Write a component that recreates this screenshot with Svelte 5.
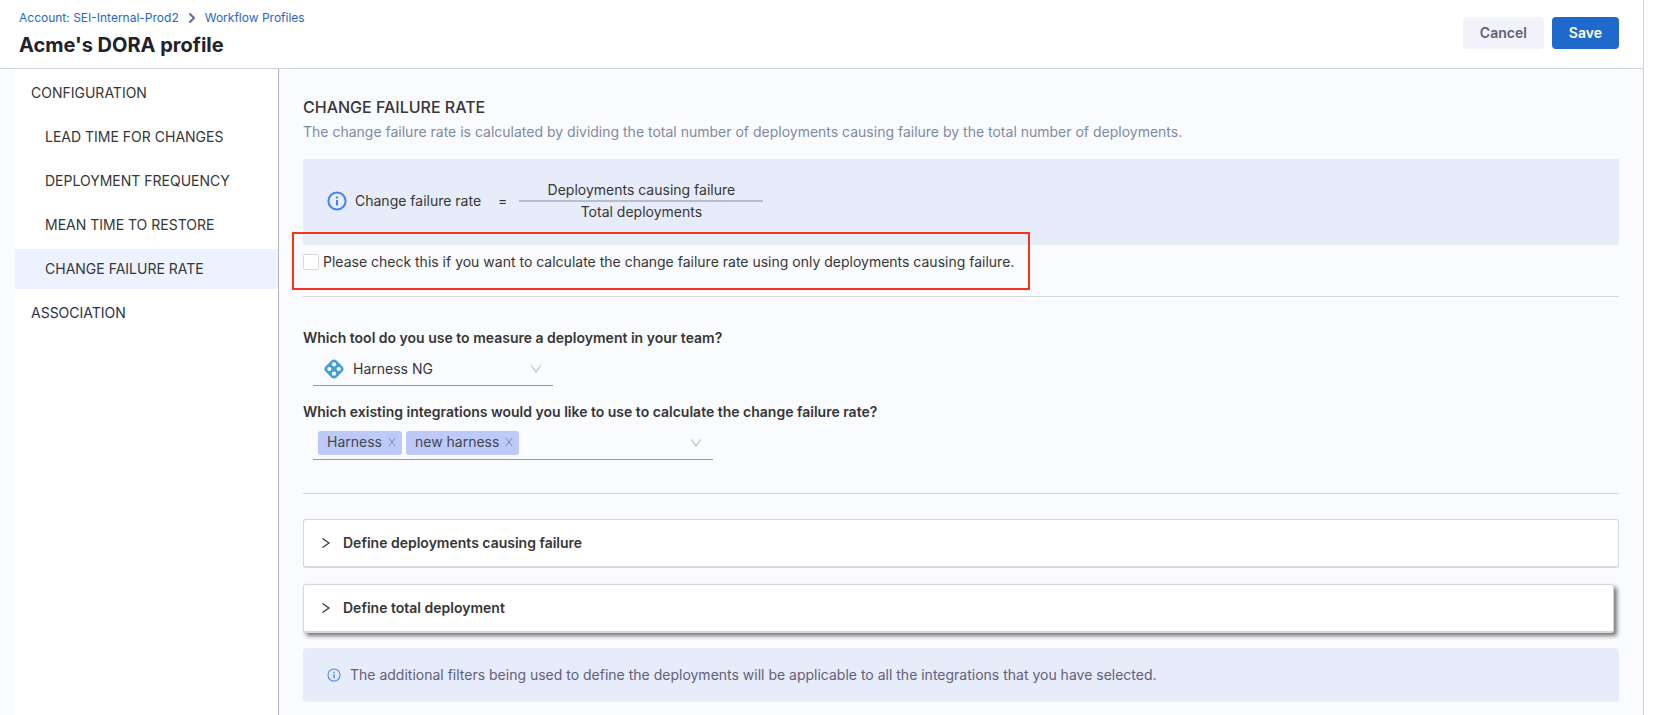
<script>
  const sections = ['LEAD TIME FOR CHANGES', 'DEPLOYMENT FREQUENCY', 'MEAN TIME TO RESTORE', 'CHANGE FAILURE RATE'];
  const active = 'CHANGE FAILURE RATE';
  let integrations = $state(['Harness', 'new harness']);
  let onlyFailures = $state(false);
  const remove = (name) => (integrations = integrations.filter((i) => i !== name));
</script>

{#snippet info(size)}
  <svg class="info-icon" width={size} height={size} viewBox="0 0 20 20" fill="none" aria-hidden="true">
    <circle cx="10" cy="10" r="8.6" stroke="currentColor" stroke-width={size > 16 ? 2 : 1.5} />
    <path d="M10 9v5.5M10 5.4v2" stroke="currentColor" stroke-width="2" />
  </svg>
{/snippet}

{#snippet down()}
  <svg class="down" width="12" height="12" viewBox="0 0 12 12" fill="none" aria-hidden="true">
    <path d="M1.3 2.5 6 9l4.7-6.5" stroke="#b9bbc0" stroke-width="1.1" />
  </svg>
{/snippet}

<div class="app">
  <header>
    <div class="heading">
      <nav class="crumbs" aria-label="Breadcrumb">
        <a href="#account">Account: SEI-Internal-Prod2</a>
        <svg width="8" height="10" viewBox="0 0 8 10" fill="none" aria-hidden="true">
          <path d="m2 1 4 4-4 4" stroke="#5c6b7c" stroke-width="1.8" stroke-linecap="round" stroke-linejoin="round" />
        </svg>
        <a href="#profiles">Workflow Profiles</a>
      </nav>
      <h1>Acme's DORA profile</h1>
    </div>
    <div class="actions">
      <button class="btn cancel">Cancel</button>
      <button class="btn save">Save</button>
    </div>
  </header>

  <div class="body">
    <nav class="side" aria-label="Profile sections">
      <a class="group" href="#configuration">CONFIGURATION</a>
      {#each sections as s}
        <a class="sub" class:active={s === active} href="#{s.toLowerCase().replaceAll(' ', '-')}">{s}</a>
      {/each}
      <a class="group navy" href="#association">ASSOCIATION</a>
    </nav>

    <main>
      <h2>CHANGE FAILURE RATE</h2>
      <p class="desc">The change failure rate is calculated by dividing the total number of deployments causing failure by the total number of deployments.</p>

      <div class="formula">
        {@render info(20)}
        <span class="term">Change failure rate</span>
        <span class="equals">=</span>
        <div class="fraction">
          <span class="top">Deployments causing failure</span>
          <span>Total deployments</span>
        </div>
      </div>

      <div class="only">
        <label>
          <input type="checkbox" bind:checked={onlyFailures} />
          Please check this if you want to calculate the change failure rate using only deployments causing failure.
        </label>
      </div>

      <section class="tools">
        <label class="question" for="tool">Which tool do you use to measure a deployment in your team?</label>
        <div class="field tool">
          <svg width="20" height="20" viewBox="0 0 20 20" aria-hidden="true">
            <rect x="2.2" y="2.2" width="15.6" height="15.6" rx="4" transform="rotate(45 10 10)" fill="#459dd8" />
            <g fill="#fff">
              <circle cx="10" cy="5.3" r="2.1" />
              <circle cx="14.7" cy="10" r="2.1" />
              <circle cx="10" cy="14.7" r="2.1" />
              <circle cx="5.3" cy="10" r="2.1" />
            </g>
          </svg>
          <select id="tool"><option>Harness NG</option></select>
          {@render down()}
        </div>

        <span class="question" id="integrations">Which existing integrations would you like to use to calculate the change failure rate?</span>
        <div class="field multi" role="group" aria-labelledby="integrations">
          {#each integrations as name}
            <span class="tag">
              {name}
              <button aria-label="Remove {name}" onclick={() => remove(name)}>
                <svg width="8" height="10" viewBox="0 0 8 10" fill="none" aria-hidden="true">
                  <path d="m.8 1 6.4 8M7.2 1 .8 9" stroke="#80869f" stroke-width="1" />
                </svg>
              </button>
            </span>
          {/each}
          <button class="open" aria-label="Choose integrations">{@render down()}</button>
        </div>
      </section>

      {#each ['Define deployments causing failure', 'Define total deployment'] as title, i}
        <button class="panel" class:raised={i === 1} aria-expanded="false">
          <svg width="10" height="12" viewBox="0 0 10 12" fill="none" aria-hidden="true">
            <path d="m1.5 1.5 6.5 4.500-6.500 4.500" stroke="#333" stroke-width="1.2" />
          </svg>
          {title}
        </button>
      {/each}

      <div class="note">
        {@render info(14)}
        The additional filters being used to define the deployments will be applicable to all the integrations that you have selected.
      </div>
    </main>
  </div>
</div>

<style>
  :global(body) {
    margin: 0;
    background: #fff;
  }
  .app,
  .app *,
  .only::after {
    box-sizing: border-box;
  }
  .app {
    display: flex;
    flex-direction: column;
    min-height: 100vh;
    margin-right: 34px;
    border-right: 1px solid #d0d0df;
    background: #fafbff;
    font: 14px/20px Inter, sans-serif;
    color: #363636;
  }
  a {
    text-decoration: none;
    color: inherit;
  }
  button,
  select {
    font: inherit;
    color: inherit;
    border: 0;
    padding: 0;
    background: none;
    cursor: pointer;
  }
  svg {
    flex: none;
  }
  header {
    display: flex;
    justify-content: space-between;
    padding: 8px 24px 9px 19px;
    border-bottom: 1px solid #cfcfe2;
    background: #fff;
  }
  .crumbs {
    display: flex;
    align-items: center;
    gap: 9px;
    font-size: 12px;
    color: #1f68cb;
  }
  h1 {
    margin: 3px 0 0;
    font-size: 20px;
    line-height: 28px;
    font-weight: 700;
    color: #22222a;
  }
  .actions {
    display: flex;
    gap: 8px;
    padding-top: 9px;
  }
  .btn {
    height: 32px;
    padding: 0 17px;
    border-radius: 4px;
    font-weight: 600;
  }
  .cancel {
    background: #f2f2fa;
    color: #636078;
  }
  .save {
    background: #1f69cd;
    color: #fff;
  }
  .body {
    flex: 1;
    display: flex;
  }
  .side {
    display: flex;
    flex-direction: column;
    gap: 4px;
    width: 264px;
    flex: none;
    margin-left: 15px;
    padding-top: 4px;
    border-right: 1px solid #b1b2b5;
    background: #fff;
  }
  .side a {
    padding: 10px 16px;
  }
  .side .sub {
    padding-left: 30px;
  }
  .side .active {
    background: #ecf2ff;
  }
  .side .navy {
    color: #27304f;
  }
  main {
    flex: 1;
    min-width: 0;
    padding: 28px 24px 13px;
  }
  h2 {
    margin: 0;
    font-size: 16px;
    line-height: 20px;
    font-weight: 500;
  }
  .desc {
    margin: 5px 0 17px;
    color: #7f8a9f;
  }
  .formula {
    display: flex;
    align-items: center;
    height: 86px;
    padding: 0 24px 2px;
    background: #e6ecfa;
  }
  .info-icon {
    color: #4483f4;
  }
  .term {
    margin-left: 8px;
  }
  .equals {
    margin: 0 12px 0 17px;
  }
  .fraction {
    display: flex;
    flex-direction: column;
    width: 244px;
    text-align: center;
  }
  .fraction .top {
    border-bottom: 2px solid #b8bdc9;
  }
  .only {
    position: relative;
    padding: 7px 0 24px;
    border-bottom: 1px solid #d5d7dd;
  }
  /* Highlight frame laid over the option and the lower edge of the formula */
  .only::after {
    content: '';
    position: absolute;
    left: -11px;
    top: -13px;
    width: 738px;
    height: 58px;
    border: 2px solid #f9321c;
    pointer-events: none;
  }
  .only label {
    display: flex;
    align-items: center;
    gap: 4px;
  }
  .only input {
    appearance: none;
    width: 16px;
    height: 16px;
    margin: 0;
    border: 1px solid #d9d9dd;
    border-radius: 2px;
    background: #fff;
  }
  .only input:checked {
    background: #1f69cd;
  }
  .tools {
    padding: 31px 0 33px;
    margin-bottom: 25px;
    border-bottom: 1px solid #d5d7dd;
  }
  .question {
    display: block;
    font-weight: 600;
  }
  .field {
    display: flex;
    align-items: center;
    height: 34px;
    margin-left: 10px;
    border-bottom: 1px solid #96979b;
  }
  .field .down {
    pointer-events: none;
  }
  .tool {
    width: 240px;
    margin-top: 4px;
    margin-bottom: 16px;
    padding: 0 11px;
  }
  .tool select {
    flex: 1;
    appearance: none;
    height: 32px;
    margin-right: -12px;
    padding: 0 12px 0 9px;
  }
  .multi {
    gap: 4px;
    width: 400px;
    margin-top: 4px;
    padding: 0 11px 0 5px;
  }
  .tag {
    display: flex;
    align-items: center;
    gap: 6px;
    height: 24px;
    padding: 0 6px 2px 9px;
    border-radius: 3px;
    background: #bdcaf7;
    color: #444652;
  }
  .tag button,
  .open {
    display: flex;
  }
  .open {
    margin-left: auto;
  }
  .panel {
    display: flex;
    align-items: center;
    gap: 12px;
    width: 100%;
    height: 49px;
    margin-bottom: 16px;
    padding: 0 17px;
    border: 1px solid #d6d8e0;
    border-bottom-width: 2px;
    border-radius: 3px;
    background: #fff;
    font-weight: 600;
    text-align: left;
  }
  .raised {
    width: calc(100% - 5px);
    box-shadow: 3px 3px 4px #777;
  }
  .note {
    display: flex;
    align-items: center;
    gap: 9px;
    min-height: 54px;
    margin-top: -1px;
    padding: 0 24px;
    border-radius: 4px;
    background: #e6ecfa;
    color: #636078;
  }
</style>
